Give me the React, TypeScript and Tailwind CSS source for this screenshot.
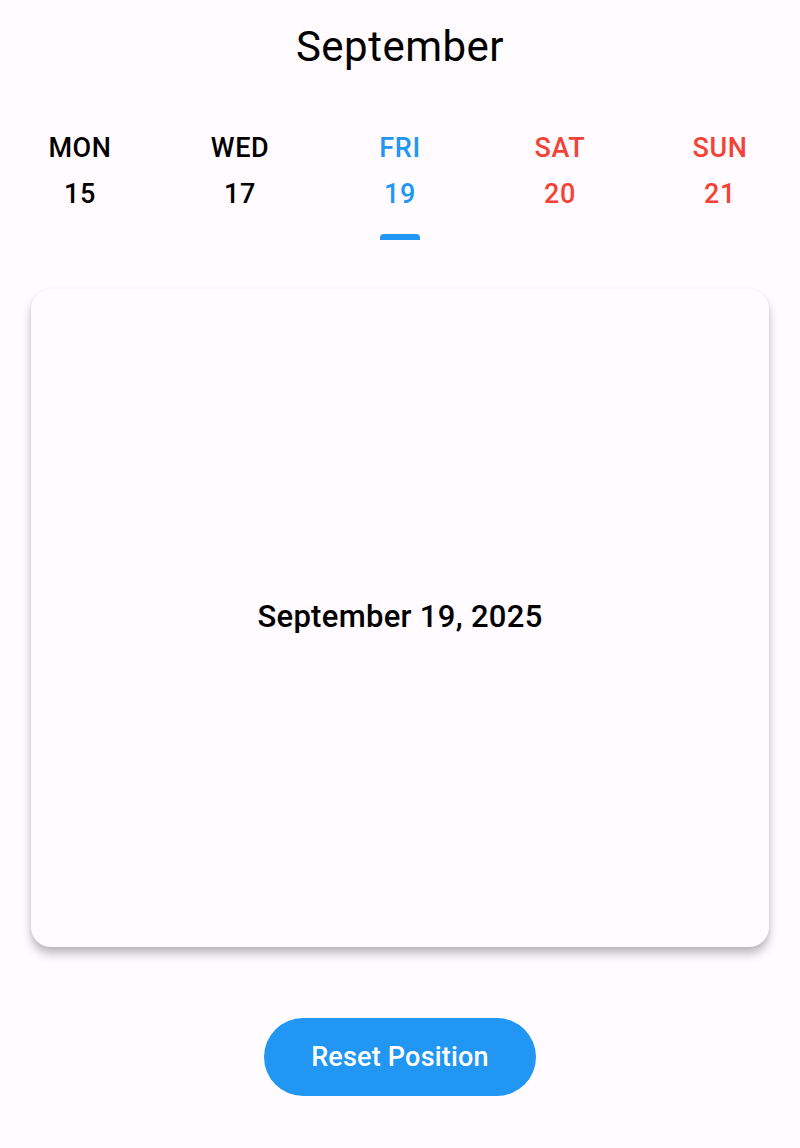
import React from "react";

const days = [
  { d: "MON", n: "15", c: "text-black" },
  { d: "WED", n: "17", c: "text-black" },
  { d: "FRI", n: "19", c: "text-[#2196F3]", sel: true },
  { d: "SAT", n: "20", c: "text-[#F44336]" },
  { d: "SUN", n: "21", c: "text-[#F44336]" },
];

export default function App() {
  return (
    <div
      className="w-[800px] h-[1148px] bg-[#FFFBFE] flex flex-col items-center overflow-hidden"
      style={{ fontFamily: "Roboto, 'Noto Sans', sans-serif" }}
    >
      <h1 className="pt-[22px] text-[42px] leading-[50px] font-normal tracking-[0.5px] text-black">September</h1>
      <div className="mt-[61px] grid grid-cols-5 w-full">
        {days.map((x) => (
          <div key={x.d} className={`flex flex-col items-center ${x.c}`}>
            <div className="text-[27px] leading-[30px] font-medium tracking-[0.6px]">{x.d}</div>
            <div className="mt-[16px] text-[27px] leading-[30px] font-medium tracking-[0.6px]">{x.n}</div>
            <div
              className={`mt-[25px] w-[40px] h-[6px] rounded-t-[4px] ${
                x.sel ? "bg-[#2196F3]" : "bg-transparent"
              }`}
            />
          </div>
        ))}
      </div>
      <div className="mt-[49px] w-[738px] h-[658px] rounded-[20px] bg-[#FFFBFE] shadow-[0_7px_10px_rgba(0,0,0,0.25),0_1px_4px_rgba(0,0,0,0.06)] flex items-center justify-center">
        <span className="text-[31px] leading-[36px] font-medium tracking-[0.3px] text-black -mt-[3px]">September 19, 2025</span>
      </div>
      <button className="mt-[71px] w-[272px] h-[78px] rounded-full bg-[#2196F3] text-white text-[27px] font-medium tracking-[0.2px] leading-[30px]">
        Reset Position
      </button>
    </div>
  );
}
